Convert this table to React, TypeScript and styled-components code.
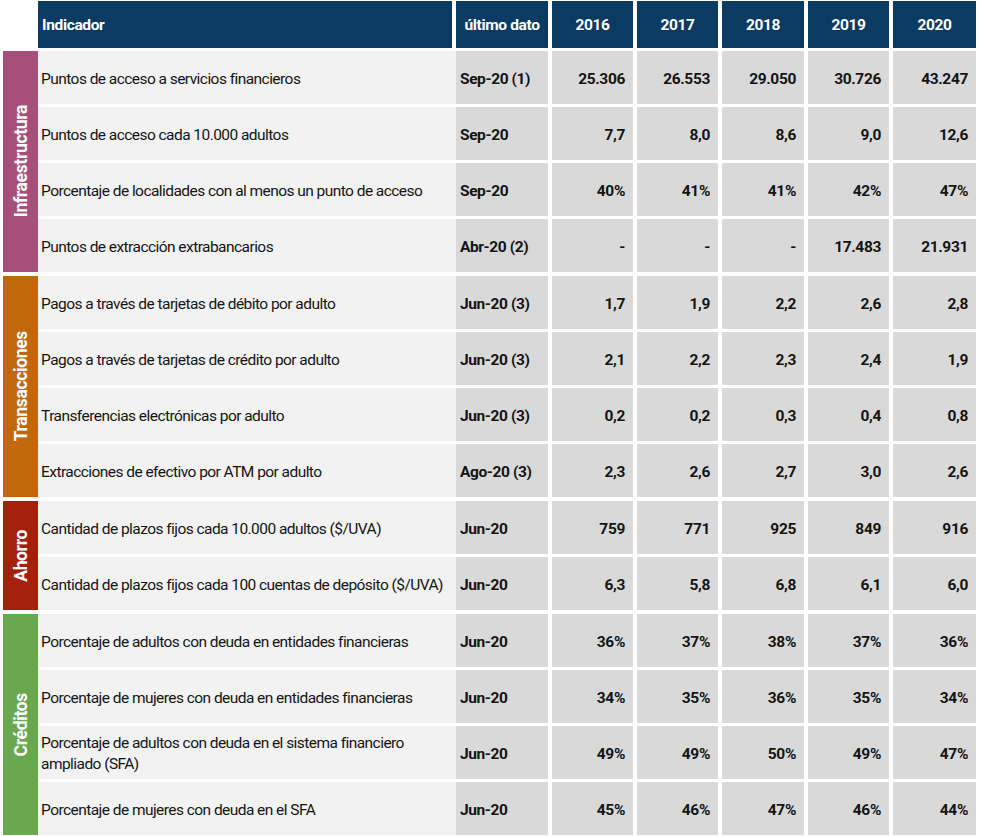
import * as React from "react";
import styled, { createGlobalStyle } from "styled-components";

const Font = `Roboto, "Liberation Sans", sans-serif`;

const Colors = {
    Header: "#0b3a63",
    Label: "#f2f2f2",
    Value: "#d9d9d9",
    Text: "#141414",
};

const GlobalStyle = createGlobalStyle`
    body {
        margin: 0;
        background: #ffffff;
        font-family: ${Font};
    }
`;

const Columns = "414px 92px 81px 81px 82px 81px 83px";

const Page = styled.div`
    width: 982px;
    height: 836px;
    padding: 1px 0 0 3px;
    box-sizing: border-box;
    display: flex;
    flex-direction: column;
    gap: 3px;
    overflow: hidden;
`;

const HeaderRow = styled.div`
    display: grid;
    grid-template-columns: ${Columns};
    column-gap: 4px;
    margin-left: 35px;
    height: 47px;
`;

const HeaderCell = styled.div<{ align?: string }>`
    background: ${Colors.Header};
    color: #ffffff;
    font-weight: bold;
    font-size: 15.5px;
    letter-spacing: -0.35px;
    white-space: nowrap;
    display: flex;
    align-items: center;
    justify-content: ${(p) => p.align || "center"};
    padding: 1px 4px 0;
`;

const Body = styled.div`
    display: flex;
    flex-direction: column;
    gap: 4px;
`;

const Group = styled.div`
    display: flex;
`;

const GroupBar = styled.div<{ color: string }>`
    width: 35px;
    flex: none;
    background: ${(p) => p.color};
    display: flex;
    align-items: center;
    justify-content: center;
`;

const GroupLabel = styled.span`
    writing-mode: vertical-rl;
    transform: rotate(180deg);
    color: #ffffff;
    font-weight: bold;
    font-size: 17.5px;
    letter-spacing: -0.35px;
    white-space: nowrap;
`;

const GroupRows = styled.div`
    display: flex;
    flex-direction: column;
    gap: 3px;
`;

const Row = styled.div`
    display: grid;
    grid-template-columns: ${Columns};
    column-gap: 4px;
    height: 53px;
`;

const LabelCell = styled.div`
    background: ${Colors.Label};
    color: ${Colors.Text};
    font-size: 15.5px;
    letter-spacing: -0.55px;
    line-height: 21px;
    display: flex;
    align-items: center;
    padding: 3px 6px 0 3px;
    margin-right: -5px;
`;

const DateCell = styled.div`
    background: ${Colors.Value};
    color: ${Colors.Text};
    font-weight: bold;
    font-size: 15.5px;
    letter-spacing: -0.4px;
    white-space: nowrap;
    display: flex;
    align-items: center;
    padding: 3px 0 0 4px;
`;

const ValueCell = styled.div`
    background: ${Colors.Value};
    color: ${Colors.Text};
    font-weight: bold;
    font-size: 15.5px;
    letter-spacing: -0.35px;
    display: flex;
    align-items: center;
    justify-content: flex-end;
    padding: 3px 8px 0 0;
`;

type Indicator = [string, string, string[]];

interface GroupData {
    name: string;
    color: string;
    rows: Indicator[];
}

const years = ["2016", "2017", "2018", "2019", "2020"];

const groups: GroupData[] = [
    {
        name: "Infraestructura",
        color: "#a64f7b",
        rows: [
            ["Puntos de acceso a servicios financieros", "Sep-20 (1)", ["25.306", "26.553", "29.050", "30.726", "43.247"]],
            ["Puntos de acceso cada 10.000 adultos", "Sep-20", ["7,7", "8,0", "8,6", "9,0", "12,6"]],
            ["Porcentaje de localidades con al menos un punto de acceso", "Sep-20", ["40%", "41%", "41%", "42%", "47%"]],
            ["Puntos de extracción extrabancarios", "Abr-20 (2)", ["-", "-", "-", "17.483", "21.931"]],
        ],
    },
    {
        name: "Transacciones",
        color: "#c1680d",
        rows: [
            ["Pagos a través de tarjetas de débito por adulto", "Jun-20 (3)", ["1,7", "1,9", "2,2", "2,6", "2,8"]],
            ["Pagos a través de tarjetas de crédito por adulto", "Jun-20 (3)", ["2,1", "2,2", "2,3", "2,4", "1,9"]],
            ["Transferencias electrónicas por adulto", "Jun-20 (3)", ["0,2", "0,2", "0,3", "0,4", "0,8"]],
            ["Extracciones de efectivo por ATM por adulto", "Ago-20 (3)", ["2,3", "2,6", "2,7", "3,0", "2,6"]],
        ],
    },
    {
        name: "Ahorro",
        color: "#a5200b",
        rows: [
            ["Cantidad de plazos fijos cada 10.000 adultos ($/UVA)", "Jun-20", ["759", "771", "925", "849", "916"]],
            ["Cantidad de plazos fijos cada 100 cuentas de depósito ($/UVA)", "Jun-20", ["6,3", "5,8", "6,8", "6,1", "6,0"]],
        ],
    },
    {
        name: "Créditos",
        color: "#6aa84f",
        rows: [
            ["Porcentaje de adultos con deuda en entidades financieras", "Jun-20", ["36%", "37%", "38%", "37%", "36%"]],
            ["Porcentaje de mujeres con deuda en entidades financieras", "Jun-20", ["34%", "35%", "36%", "35%", "34%"]],
            ["Porcentaje de adultos con deuda en el sistema financiero ampliado (SFA)", "Jun-20", ["49%", "49%", "50%", "49%", "47%"]],
            ["Porcentaje de mujeres con deuda en el SFA", "Jun-20", ["45%", "46%", "47%", "46%", "44%"]],
        ],
    },
];

export default function App(): JSX.Element {
    return (
        <Page>
            <GlobalStyle />
            <HeaderRow>
                <HeaderCell align="flex-start">Indicador</HeaderCell>
                <HeaderCell>último dato</HeaderCell>
                {years.map((y) => (
                    <HeaderCell key={y}>{y}</HeaderCell>
                ))}
            </HeaderRow>
            <Body>
                {groups.map((g) => (
                    <Group key={g.name}>
                        <GroupBar color={g.color}>
                            <GroupLabel>{g.name}</GroupLabel>
                        </GroupBar>
                        <GroupRows>
                            {g.rows.map(([label, date, values]) => (
                                <Row key={label}>
                                    <LabelCell>{label}</LabelCell>
                                    <DateCell>{date}</DateCell>
                                    {values.map((v, i) => (
                                        <ValueCell key={i}>{v}</ValueCell>
                                    ))}
                                </Row>
                            ))}
                        </GroupRows>
                    </Group>
                ))}
            </Body>
        </Page>
    );
}
